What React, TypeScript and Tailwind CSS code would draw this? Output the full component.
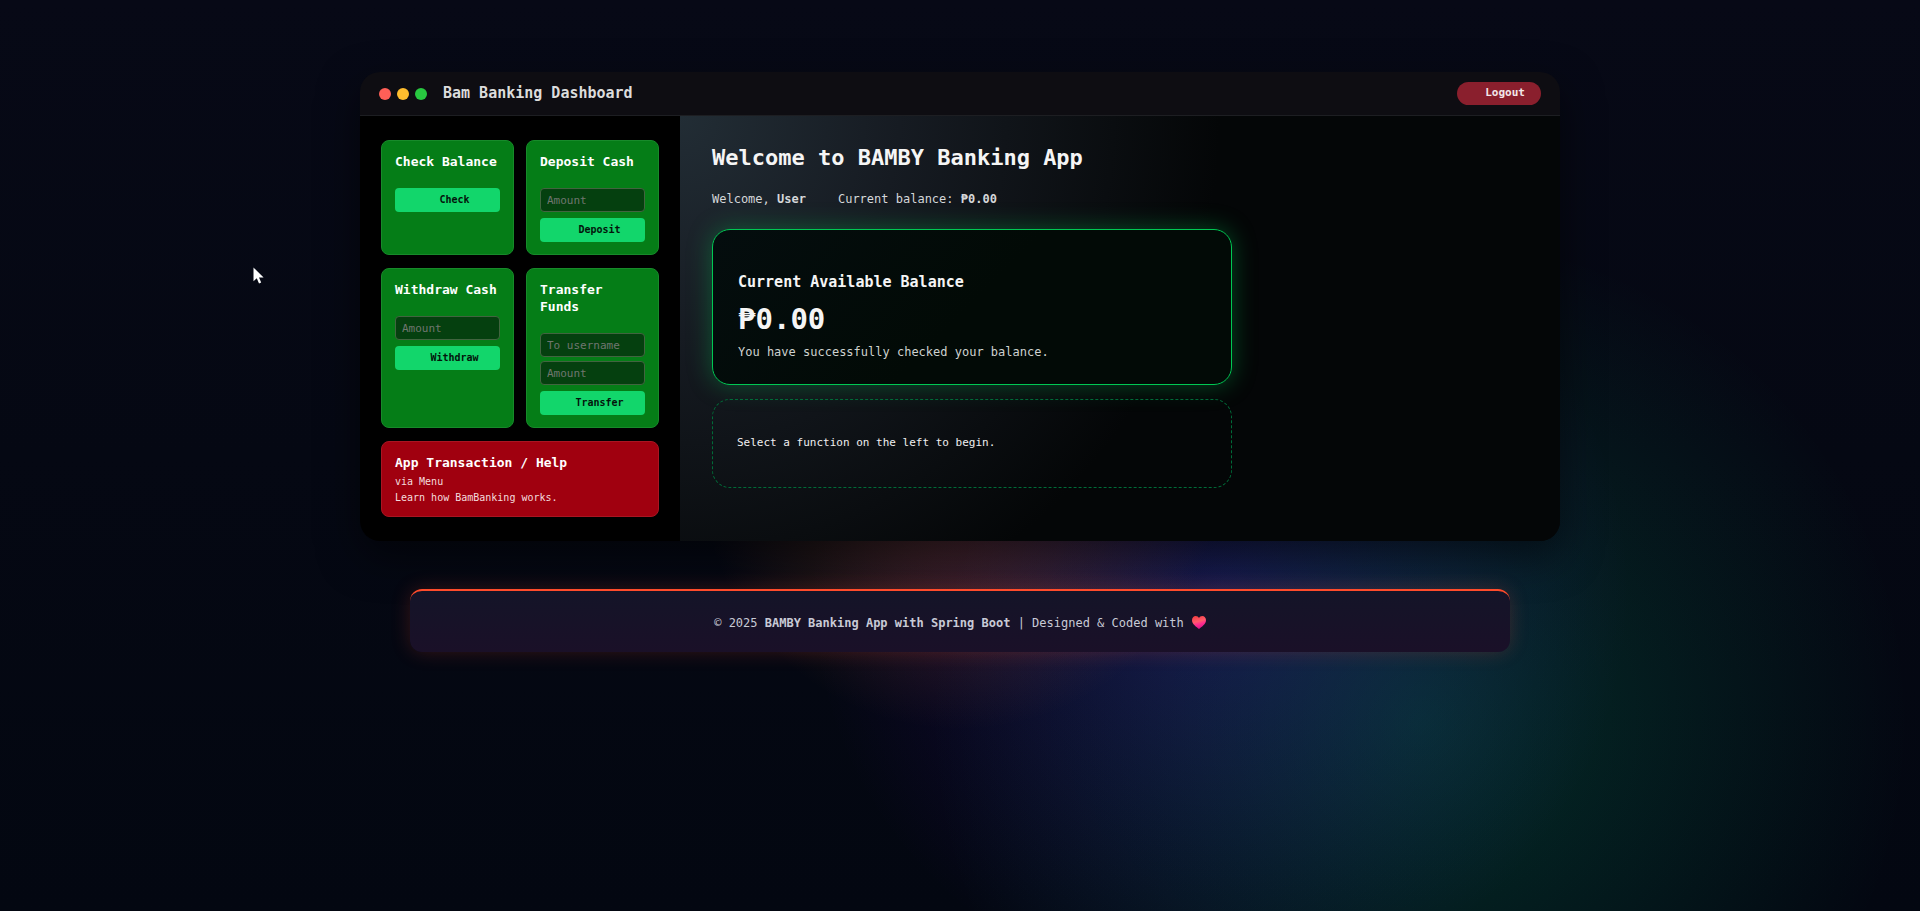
import type { ReactNode } from "react";

const HeartIcon = () => {
  return (
    <svg
      viewBox="0 0 14 13"
      className="ml-2 inline-block h-[13px] w-3.5 align-[-2px]"
      aria-hidden="true"
    >
      <defs>
        <linearGradient id="heart" x1="0" y1="0" x2="0.3" y2="1">
          <stop offset="0" stopColor="#f23a3a" />
          <stop offset="0.5" stopColor="#ff5a6c" />
          <stop offset="0.7" stopColor="#ff2f8c" />
          <stop offset="1" stopColor="#e0188a" />
        </linearGradient>
      </defs>
      <path
        d="M7 13C4.6 11 0 8 0 4.2 0 1.8 1.6 0 3.7 0 5.2 0 6.4.8 7 2.1 7.6.8 8.8 0 10.3 0 12.4 0 14 1.8 14 4.2 14 8 9.4 11 7 13Z"
        fill="url(#heart)"
      />
    </svg>
  );
};

const Pointer = () => {
  return (
    <svg
      viewBox="0 0 11 17"
      className="pointer-events-none absolute top-[267px] left-[253px] h-[17px] w-[11px]"
      aria-hidden="true"
    >
      <path
        d="M.5.5V14.2L3.8 11.3 6 16.4 8.2 15.4 6 10.6H10.6Z"
        fill="#fff"
      />
    </svg>
  );
};

const Field = ({ label, type = "text" }: { label: string; type?: string }) => {
  return (
    <input
      type={type}
      aria-label={label}
      placeholder={label}
      className="block h-6 w-full rounded border border-[#41643f] bg-[#05400f] px-1.5 text-[11px] text-white placeholder:text-[#70766f] outline-none"
    />
  );
};

const Action = ({ children }: { children: ReactNode }) => {
  return (
    <button
      type="submit"
      className="block h-6 w-full rounded bg-[#12d66b] pb-0.5 pl-3.5 text-[10px] font-bold text-[#03150b]"
    >
      {children}
    </button>
  );
};

const Card = ({ title, children }: { title: string; children: ReactNode }) => {
  return (
    <form
      onSubmit={(e) => e.preventDefault()}
      className="rounded-lg border border-[#178a2a] bg-[#057d17] px-[13px] py-3"
    >
      <h3 className="mb-[18px] text-[13px] leading-[17px] font-bold text-white">
        {title}
      </h3>
      {children}
    </form>
  );
};

const App = () => {
  return (
    <div className="relative min-h-screen overflow-hidden bg-[linear-gradient(180deg,#070916,#050813_50%,#030711)] font-['DejaVu_Sans_Mono',monospace] text-[#e6e6e6]">
      <div className="absolute inset-0 bg-[radial-gradient(circle_at_960px_470px,rgba(255,130,60,0.28)_0,rgba(255,110,70,0)_260px),radial-gradient(circle_at_1420px_722px,rgba(0,240,160,0.16)_0,rgba(0,240,160,0)_490px),radial-gradient(circle_at_1220px_590px,rgba(95,10,255,0.22)_0,rgba(95,10,255,0)_410px)]" />

      <div className="relative pt-[72px]">
        <main className="mx-auto w-full max-w-[1200px] overflow-hidden rounded-[20px] shadow-[0_15px_40px_rgba(0,0,0,0.5)]">
          <header className="flex h-11 items-center justify-between border-b border-[#1d1e22] bg-[#0e0d12] px-[19px]">
            <div className="flex items-center">
              <div className="flex gap-1.5">
                <span className="size-3 rounded-full bg-[#ff5f57]" />
                <span className="size-3 rounded-full bg-[#ffbd2e]" />
                <span className="size-3 rounded-full bg-[#28c840]" />
              </div>
              <h1 className="ml-4 text-[15px] font-bold text-[#dcdcdc]">
                Bam Banking Dashboard
              </h1>
            </div>
            <button
              type="button"
              className="h-[23px] rounded-full bg-[#8a1f2d] pr-4 pl-7 text-[11px] font-bold text-[#f3e6e8]"
            >
              Logout
            </button>
          </header>

          <div className="flex">
            <aside className="w-80 shrink-0 bg-black px-[21px] py-6">
              <div className="grid grid-cols-2 gap-x-3 gap-y-[13px]">
                <Card title="Check Balance">
                  <Action>Check</Action>
                </Card>
                <Card title="Deposit Cash">
                  <Field label="Amount" type="number" />
                  <div className="mt-1.5">
                    <Action>Deposit</Action>
                  </div>
                </Card>
                <Card title="Withdraw Cash">
                  <Field label="Amount" type="number" />
                  <div className="mt-1.5">
                    <Action>Withdraw</Action>
                  </div>
                </Card>
                <Card title="Transfer Funds">
                  <div className="space-y-1">
                    <Field label="To username" />
                    <Field label="Amount" type="number" />
                  </div>
                  <div className="mt-1.5">
                    <Action>Transfer</Action>
                  </div>
                </Card>
                <section className="col-span-2 rounded-lg border border-[#a91522] bg-[#a0000f] px-[13px] pt-3 pb-2.5">
                  <h3 className="mb-0.5 text-[13px] leading-[18px] font-bold text-white">
                    App Transaction / Help
                  </h3>
                  <p className="text-[10px] leading-4 text-[#f3dcde]">via Menu</p>
                  <p className="text-[10px] leading-4 text-[#f3dcde]">
                    Learn how BamBanking works.
                  </p>
                </section>
              </div>
            </aside>

            <section className="flex-1 bg-[#040607] bg-[radial-gradient(circle_at_top_left,#222d35_0,#161b22_220px,#040607_540px)] px-8 pt-6">
              <h2 className="text-[22px] leading-9 font-bold text-[#f5f5f5]">
                Welcome to BAMBY Banking App
              </h2>
              <p className="mt-[13px] flex gap-8 text-[12px] leading-5 text-[#d5d7d9]">
                <span>
                  Welcome, <b>User</b>
                </span>
                <span>
                  Current balance: <b>₱0.00</b>
                </span>
              </p>
              <div className="mt-5 max-w-[520px] rounded-[18px] border border-[#00c853] bg-[linear-gradient(135deg,#040d0e,#020a06_50%)] px-[25px] pt-10 pb-6 shadow-[0_0_25px_rgba(0,200,83,0.35)]">
                <h3 className="text-[15px] leading-6 font-bold text-[#f5f5f5]">
                  Current Available Balance
                </h3>
                <p className="text-[29px] leading-[50px] font-bold text-[#f5f5f5]">
                  ₱0.00
                </p>
                <p className="text-[12px] leading-4 text-[#cfd2d0]">
                  You have successfully checked your balance.
                </p>
              </div>
              <div className="mt-3.5 flex h-[89px] max-w-[520px] items-center rounded-[18px] border border-dashed border-[#006b38] px-6 text-[11px] text-[#f0f0f0]">
                Select a function on the left to begin.
              </div>
            </section>
          </div>
        </main>

        <footer className="mx-auto mt-12 w-full max-w-[1100px] rounded-xl border-t-2 border-[#ff4b2b] bg-[linear-gradient(180deg,#141428,#1a1028)] pt-6 pb-5 text-center text-[12px] leading-[17px] text-[#c8cad6] shadow-[0_0_20px_rgba(255,75,43,0.2)]">
          © 2025 <b>BAMBY Banking App with Spring Boot</b> | Designed &amp; Coded
          with
          <HeartIcon />
        </footer>
      </div>
      <Pointer />
    </div>
  );
};

export default App;
